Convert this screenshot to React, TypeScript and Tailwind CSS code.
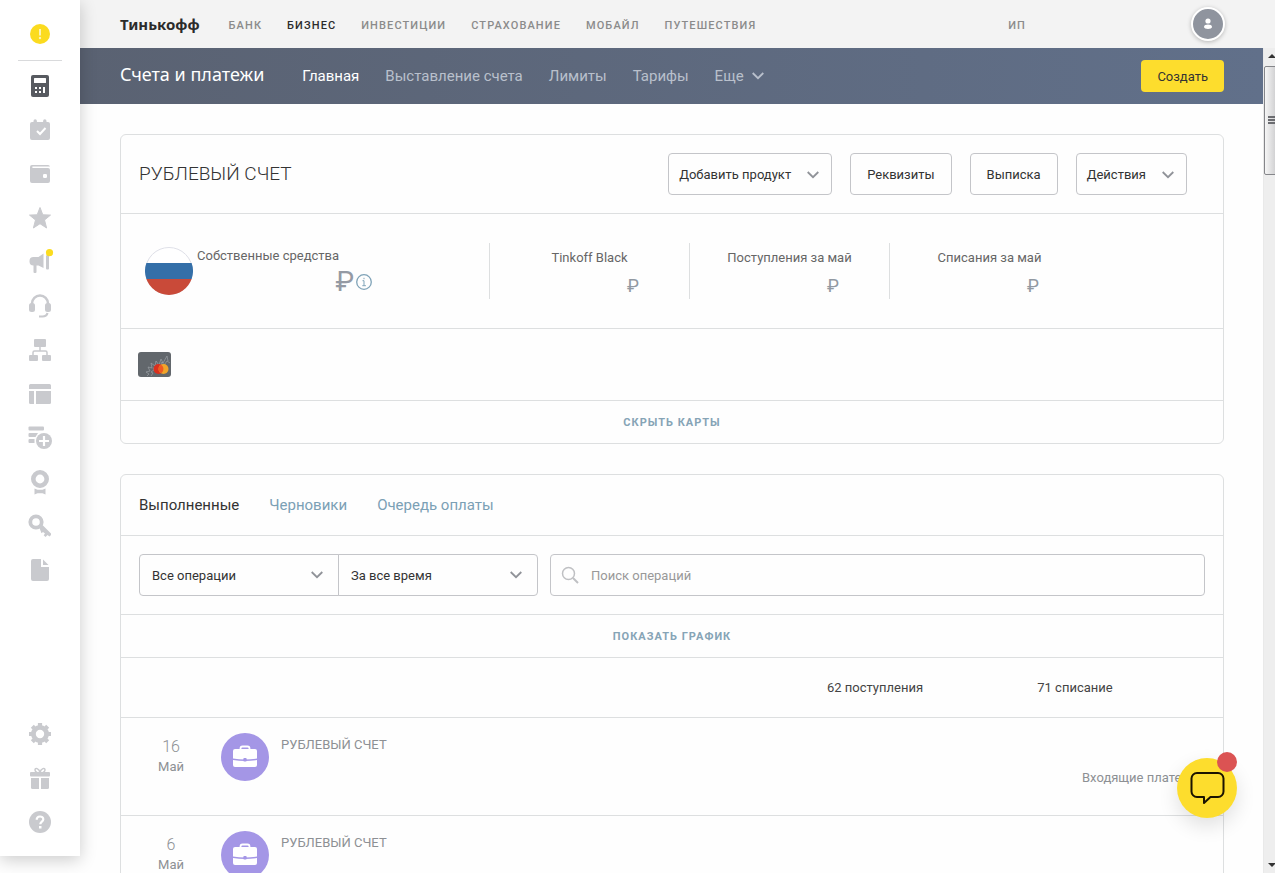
import React, { useState } from "react";
import classNames from "clsx";

type IconProps = { className?: string };

function ChevronIcon({ className }: IconProps) {
  return (
    <svg
      viewBox="0 0 12 8"
      className={classNames("w-3 h-2 flex-shrink-0", className)}
      fill="none"
      stroke="currentColor"
      strokeWidth="1.800"
      aria-hidden="true"
    >
      <path d="M0.7 1 L6 6.2 L11.3 1" />
    </svg>
  );
}

function CalculatorIcon() {
  return (
    <>
      <rect x="3" y="1" width="18" height="22" rx="2" />
      <g fill="#fff">
        <rect x="6" y="4" width="12" height="5" rx="0.5" />
        <rect x="7" y="13" width="2" height="2" />
        <rect x="11" y="13" width="2" height="2" />
        <rect x="7" y="17" width="2" height="2" />
        <rect x="11" y="17" width="2" height="2" />
        <rect x="15" y="13" width="2" height="6" />
      </g>
    </>
  );
}

function CalendarIcon() {
  return (
    <>
      <path d="M4 4h1.5V3a1.7 1.7 0 0 1 3.4 0v1h6.2V3a1.7 1.7 0 0 1 3.4 0v1H20a2 2 0 0 1 2 2v14a2 2 0 0 1-2 2H4a2 2 0 0 1-2-2V6a2 2 0 0 1 2-2z" />
      <path d="M9 13l3 3 5.5-6" fill="none" stroke="#fff" strokeWidth="2" />
    </>
  );
}

function WalletIcon() {
  return (
    <>
      <path d="M4 3h16a2 2 0 0 1 2 1.6H4.4V6H20a2 2 0 0 1 2 2v11a2 2 0 0 1-2 2H4a2 2 0 0 1-2-2V5a2 2 0 0 1 2-2z" />
      <rect x="15" y="12" width="4" height="4" rx="1.2" fill="#fff" />
    </>
  );
}

function StarIcon() {
  return (
    <path
      d="M12 1.500l2.800 7.300 7.700.300-6 4.900 2.100 8L12 17.700 5.400 22l2.100-8-6-4.900 7.700-.3z"
      stroke="currentColor"
      strokeLinejoin="round"
    />
  );
}

function MegaphoneIcon() {
  return (
    <>
      <path d="M15.500 3.500v14.500l-5-2.500H5.500A4 4 0 0 1 1.500 11.500v-.5a4 4 0 0 1 4-4h5z" />
      <rect x="5.500" y="14" width="3" height="9" rx="1" />
      <rect x="18" y="5" width="3" height="14.500" rx="1" />
      <circle cx="21.500" cy="2.700" r="3.600" fill="#fbdc1f" />
    </>
  );
}

function HeadsetIcon() {
  return (
    <>
      <path
        d="M4 13V9.500a8 8 0 0 1 16 0V13"
        fill="none"
        stroke="currentColor"
        strokeWidth="2.500"
      />
      <rect x="1" y="9" width="6" height="9" rx="2.500" />
      <rect x="17" y="9" width="6" height="9" rx="2.500" />
      <path
        d="M11 22.500h3.500q4 0 5-3.500"
        fill="none"
        stroke="currentColor"
        strokeWidth="2.200"
      />
    </>
  );
}

function StructureIcon() {
  return (
    <>
      <rect x="6" y="1" width="12" height="8" rx="1" />
      <rect x="1" y="17" width="9" height="6" rx="1" />
      <rect x="14" y="17" width="9" height="6" rx="1" />
      <path
        d="M12 9v4M5 17v-2.500a1.500 1.500 0 0 1 1.500-1.500h11a1.500 1.500 0 0 1 1.500 1.500V17"
        fill="none"
        stroke="currentColor"
        strokeWidth="1.500"
      />
    </>
  );
}

function LayoutIcon() {
  return (
    <>
      <path d="M2.500 2h19A1.500 1.500 0 0 1 23 3.500V7H1V3.500A1.500 1.500 0 0 1 2.500 2z" />
      <path d="M1 9h5v13H2.500A1.500 1.500 0 0 1 1 20.500z" />
      <path d="M8 9h15v11.500a1.500 1.500 0 0 1-1.500 1.500H8z" />
    </>
  );
}

function AddListIcon() {
  return (
    <>
      <rect x="0.500" y="0.500" width="15.500" height="4" rx="1" />
      <path d="M1.500 7H10l-2.500 4h-6a1 1 0 0 1-1-1V8a1 1 0 0 1 1-1z" />
      <path d="M1.500 13H6.500v4h-5a1 1 0 0 1-1-1v-2a1 1 0 0 1 1-1z" />
      <circle cx="16" cy="15" r="8" />
      <path d="M16 10v10M11 15h10" stroke="#fff" strokeWidth="2.200" />
    </>
  );
}

function AwardIcon() {
  return (
    <>
      <circle
        cx="12"
        cy="9"
        r="6.700"
        fill="none"
        stroke="currentColor"
        strokeWidth="4.600"
      />
      <path d="M6.500 18.500l3 1.200h5l3-1.200v6l-3-1.300h-5l-3 1.300z" />
    </>
  );
}

function KeyIcon() {
  return (
    <>
      <circle
        cx="8"
        cy="8"
        r="5.700"
        fill="none"
        stroke="currentColor"
        strokeWidth="3.800"
      />
      <path d="M11.500 14l3-3 8.500 8.500v1.500l-1.500 1.500-2-1.500-2 2-1.800-1.800 1.300-1.700-2-1.500-1.500 1.200z" />
    </>
  );
}

function FileIcon() {
  return (
    <>
      <path d="M5 1h8v8h8v12a2 2 0 0 1-2 2H5a2 2 0 0 1-2-2V3a2 2 0 0 1 2-2z" />
      <path d="M15 1.500L20.500 7H15z" />
    </>
  );
}

function GearIcon() {
  return (
    <>
      <circle
        cx="12"
        cy="12"
        r="6.600"
        fill="none"
        stroke="currentColor"
        strokeWidth="4.800"
      />
      <g stroke="currentColor" strokeWidth="4.200">
        <path d="M12 1v3M12 20v3M1 12h3M20 12h3" />
        <path d="M4.300 4.300l2 2M17.700 17.700l2 2M4.300 19.700l2-2M17.700 6.300l2-2" />
      </g>
    </>
  );
}

function GiftIcon() {
  return (
    <>
      <rect x="2" y="6" width="20" height="4.500" rx="1" />
      <path d="M3 12h8v11H4.500A1.500 1.500 0 0 1 3 21.500z" />
      <path d="M13 12h8v9.500a1.500 1.500 0 0 1-1.500 1.500H13z" />
      <path
        d="M12 6.500c-1-4.500-5-5-5-2.500 0 1.500 1 2 2 2.500M12 6.500c1-4.500 5-5 5-2.500 0 1.500-1 2-2 2.500"
        fill="none"
        stroke="currentColor"
        strokeWidth="1.500"
      />
    </>
  );
}

function HelpIcon() {
  return (
    <>
      <circle cx="12" cy="12" r="11" />
      <path
        d="M8.700 9.800c0-4.400 6.600-4.200 6.600-.5 0 2.400-3 2.400-3 5"
        fill="none"
        stroke="#fff"
        strokeWidth="2.200"
      />
      <rect x="11" y="16" width="2.500" height="2.500" fill="#fff" />
    </>
  );
}

const MAIN_ITEMS = [
  { label: "Счета", icon: CalculatorIcon },
  { label: "Календарь", icon: CalendarIcon },
  { label: "Кошелек", icon: WalletIcon },
  { label: "Избранное", icon: StarIcon },
  { label: "Продвижение", icon: MegaphoneIcon },
  { label: "Поддержка", icon: HeadsetIcon },
  { label: "Структура", icon: StructureIcon },
  { label: "Сайты", icon: LayoutIcon },
  { label: "Заявки", icon: AddListIcon },
  { label: "Награды", icon: AwardIcon },
  { label: "Доступ", icon: KeyIcon },
  { label: "Документы", icon: FileIcon },
];

const BOTTOM_ITEMS = [
  { label: "Настройки", icon: GearIcon },
  { label: "Подарки", icon: GiftIcon },
  { label: "Помощь", icon: HelpIcon },
];

type SidebarItemProps = {
  label: string;
  icon: () => React.ReactElement;
  active?: boolean;
};
function SidebarItem({ label, icon: Icon, active }: SidebarItemProps) {
  return (
    <a
      href="#"
      aria-label={label}
      className={classNames(
        "flex items-center justify-center w-full h-11",
        active ? "text-[#575a60]" : "text-[#c9cace]"
      )}
    >
      <svg
        viewBox="0 0 24 24"
        className="w-6 h-6 overflow-visible"
        fill="currentColor"
        aria-hidden="true"
      >
        <Icon />
      </svg>
    </a>
  );
}

function Sidebar() {
  return (
    <aside className="relative z-10 flex-shrink-0 flex flex-col items-center w-20 mb-[17px] pt-6 pb-3 bg-white shadow-[0_4px_16px_rgba(0,0,0,0.2)]">
      <svg viewBox="0 0 20 20" className="flex-shrink-0 w-5 h-5" aria-hidden="true">
        <circle cx="10" cy="10" r="10" fill="#fbdb1f" />
        <path d="M10 5v6.500" stroke="#fdf3b5" strokeWidth="2" />
        <circle cx="10" cy="14" r="1.200" fill="#fdf3b5" />
      </svg>
      <hr className="w-11 mt-4 mb-[3px] border-[#d9dadc]" />
      <nav className="w-full">
        {MAIN_ITEMS.map((item, i) => (
          <SidebarItem key={item.label} {...item} active={i === 0} />
        ))}
      </nav>
      <nav className="w-full mt-auto">
        {BOTTOM_ITEMS.map((item) => (
          <SidebarItem key={item.label} {...item} />
        ))}
      </nav>
    </aside>
  );
}

const SITES = [
  "БАНК",
  "БИЗНЕС",
  "ИНВЕСТИЦИИ",
  "СТРАХОВАНИЕ",
  "МОБАЙЛ",
  "ПУТЕШЕСТВИЯ",
];

function TopBar() {
  return (
    <header className="flex-shrink-0 flex items-center h-12 pl-10 pr-[50px] bg-[#f3f3f3] text-[11px] font-medium tracking-widest text-[#8b8b8b]">
      <a
        href="#"
        className="mr-[29px] font-['Noto_Sans',sans-serif] text-[15px] font-bold tracking-normal text-[#2b2b2b]"
      >
        Тинькофф
      </a>
      <nav className="flex gap-[25px] pt-1">
        {SITES.map((site) => (
          <a
            key={site}
            href="#"
            className={classNames(site === "БИЗНЕС" && "text-[#2b2b2b]")}
          >
            {site}
          </a>
        ))}
      </nav>
      <span className="ml-auto mr-[165px] pt-1">ИП</span>
      <button
        aria-label="Профиль"
        className="w-[34px] h-[34px] rounded-full border-2 border-white bg-[#8f949e] shadow-[0_1px_4px_rgba(0,0,0,0.25)]"
      >
        <svg viewBox="0 0 30 30" fill="#fff" aria-hidden="true">
          <circle cx="15" cy="12" r="2.600" />
          <path d="M11 18c0-3.200 8-3.200 8 0 0 2.600-8 2.600-8 0z" />
        </svg>
      </button>
    </header>
  );
}

const SECTIONS = ["Главная", "Выставление счета", "Лимиты", "Тарифы"];

function SectionBar() {
  return (
    <div className="flex items-center h-14 pl-10 pr-[39px] bg-linear-to-r from-[#5a6272] to-[#61708a] text-[15px] text-[#b9c0cc]">
      <h1 className="mr-[38px] pb-1 font-['Noto_Sans',sans-serif] text-lg text-white">
        Счета и платежи
      </h1>
      <nav className="flex items-center gap-[26px]">
        {SECTIONS.map((section, i) => (
          <a
            key={section}
            href="#"
            className={classNames(i === 0 && "text-white")}
          >
            {section}
          </a>
        ))}
        <button className="flex items-center gap-2">
          Еще
          <ChevronIcon />
        </button>
      </nav>
      <button className="ml-auto h-8 px-4 pt-px rounded bg-[#fddd2d] text-[13px] text-[#333]">
        Создать
      </button>
    </div>
  );
}

type ActionButtonProps = { label: string; withMenu?: boolean };
function ActionButton({ label, withMenu }: ActionButtonProps) {
  return (
    <button
      className={classNames(
        "flex items-center h-[42px] pt-px rounded border border-[#c4c5c9] text-[13px] text-[#333]",
        withMenu ? "gap-4 pl-[10px] pr-3" : "px-4"
      )}
    >
      {label}
      {withMenu && <ChevronIcon className="text-[#909399]" />}
    </button>
  );
}

function AccountStat({ label }: { label: string }) {
  return (
    <div className="w-[200px] h-14 pt-[5px] border-l border-[#dddfe0] text-center text-[13px] leading-5 text-[#666]">
      {label}
      <div className="mt-1 pr-[50px] text-right text-lg leading-7 text-[#9299a2]">
        ₽
      </div>
    </div>
  );
}

function AccountCard() {
  return (
    <section className="border border-[#dddfe0] rounded-md">
      <div className="flex items-center justify-between h-[79px] pl-[18px] pr-9 border-b border-[#dddfe0]">
        <h2 className="text-[19px] font-light text-[#333]">РУБЛЕВЫЙ СЧЕТ</h2>
        <div className="flex gap-[18px]">
          <ActionButton label="Добавить продукт" withMenu />
          <ActionButton label="Реквизиты" />
          <ActionButton label="Выписка" />
          <ActionButton label="Действия" withMenu />
        </div>
      </div>
      <div className="flex items-center h-[115px] border-b border-[#dddfe0]">
        <div className="flex items-center w-[368px] pl-6 gap-1">
          <svg viewBox="0 0 48 48" className="w-12 h-12" aria-hidden="true">
            <circle cx="24" cy="24" r="23.500" fill="#fff" stroke="#dfe0e8" />
            <path d="M1.400 16H46.600A24 24 0 0 1 46.600 32H1.400A24 24 0 0 1 1.400 16z" fill="#346fa8" />
            <path d="M1.400 32H46.600A24 24 0 0 1 1.400 32z" fill="#c94a39" />
          </svg>
          <div className="w-[175px] pt-px text-[13px] leading-5 text-[#666]">
            Собственные средства
            <div className="flex items-center justify-end gap-[2px] text-[28px] leading-8 text-[#949aa4]">
              ₽
              <svg
                viewBox="0 0 16 16"
                className="w-4 h-4"
                fill="none"
                stroke="#7fa3b8"
                aria-hidden="true"
              >
                <circle cx="8" cy="8" r="7.300" strokeWidth="1.300" />
                <path d="M6.500 6.700H8V11.500M6.300 11.700h3.600M8 3.800v1.400" />
              </svg>
            </div>
          </div>
        </div>
        <AccountStat label="Tinkoff Black" />
        <AccountStat label="Поступления за май" />
        <AccountStat label="Списания за май" />
      </div>
      <div className="flex items-center h-[72px] px-[17px] border-b border-[#dddfe0]">
        <svg viewBox="0 0 33 25" className="w-[33px] h-[25px]" aria-hidden="true">
          <rect width="33" height="25" rx="3" fill="#62676c" />
          <path
            d="M9 24l2-2-3-2 4-1-2-4 4 1-1-5 4 3 1-5 3 4 2-6 2 4 4-7 1 5M13 24l2-3-2-1 3-2-1-2 4 0 0-4 3 2 2-4 2 3 3-4 3 2"
            fill="none"
            stroke="#a3a8ad"
            strokeWidth="0.600"
          />
          <circle cx="20.500" cy="17" r="5" fill="#d9301e" />
          <circle cx="25.500" cy="17" r="5" fill="#f0a52a" />
          <path d="M23 12.700a5 5 0 0 1 0 8.600 5 5 0 0 1 0-8.600z" fill="#ee5a22" />
        </svg>
      </div>
      <button className="block w-full h-[42px] pt-[2px] text-[11px] font-bold tracking-[1px] text-[#86a4b6]">
        СКРЫТЬ КАРТЫ
      </button>
    </section>
  );
}

type FilterSelectProps = {
  label: string;
  options: string[];
  className?: string;
};
function FilterSelect({ label, options, className }: FilterSelectProps) {
  return (
    <label
      className={classNames(
        "grid items-center w-[200px] h-[42px] border border-[#c4c5c9]",
        className
      )}
    >
      <select
        aria-label={label}
        className="col-start-1 row-start-1 w-full h-full px-3 pt-px appearance-none bg-transparent text-[13px] text-[#333] outline-none"
      >
        {options.map((option) => (
          <option key={option}>{option}</option>
        ))}
      </select>
      <ChevronIcon className="col-start-1 row-start-1 justify-self-end mr-[15px] pointer-events-none text-[#909399]" />
    </label>
  );
}

type Operation = { day: number; month: string; account: string; kind?: string };

const OPERATIONS: Operation[] = [
  { day: 16, month: "Май", account: "РУБЛЕВЫЙ СЧЕТ", kind: "Входящие платежи" },
  { day: 6, month: "Май", account: "РУБЛЕВЫЙ СЧЕТ" },
];

function OperationRow({ operation }: { operation: Operation }) {
  return (
    <li className="flex items-start h-[98px] px-[18px] pt-[15px] border-t border-[#dddfe0] text-[13px] leading-5 text-[#8d9094]">
      <div className="w-16 pt-1 text-center">
        <div className="text-base leading-5 font-light">{operation.day}</div>
        {operation.month}
      </div>
      <svg viewBox="0 0 48 48" className="w-12 h-12 ml-[18px] mr-3" aria-hidden="true">
        <circle cx="24" cy="24" r="24" fill="#a496e6" />
        <path
          d="M19.500 16.500v-1a2 2 0 0 1 2-2h5a2 2 0 0 1 2 2v1"
          fill="none"
          stroke="#fff"
          strokeWidth="1.800"
        />
        <path d="M14 16h20a2 2 0 0 1 2 2v7.500q-12 1.800-24 0V18a2 2 0 0 1 2-2z" fill="#fff" />
        <path d="M12 27q12 1.800 24 0v5a2 2 0 0 1-2 2H14a2 2 0 0 1-2-2z" fill="#fff" />
        <rect x="22.300" y="25" width="3.400" height="3.600" rx="1" fill="#a496e6" />
      </svg>
      <span className="pt-[2px]">{operation.account}</span>
      {operation.kind && (
        <span className="w-[123px] ml-auto mt-[35px] whitespace-nowrap">
          {operation.kind}
        </span>
      )}
    </li>
  );
}

const TABS = ["Выполненные", "Черновики", "Очередь оплаты"];

function OperationsCard() {
  const [activeTab, setActiveTab] = useState(TABS[0]);

  return (
    <section className="border border-[#dddfe0] rounded-md">
      <div className="flex items-center gap-[30px] h-[61px] px-[18px] border-b border-[#dddfe0] text-[15px]">
        {TABS.map((tab) => (
          <button
            key={tab}
            onClick={() => setActiveTab(tab)}
            className={tab === activeTab ? "text-[#333]" : "text-[#7ba0b5]"}
          >
            {tab}
          </button>
        ))}
      </div>
      <div className="flex items-center h-[79px] px-[18px] border-b border-[#dddfe0]">
        <FilterSelect
          label="Тип операций"
          options={["Все операции", "Поступления", "Списания"]}
          className="rounded-l"
        />
        <FilterSelect
          label="Период"
          options={["За все время", "За месяц", "За неделю"]}
          className="-ml-px rounded-r"
        />
        <label className="flex-1 flex items-center gap-3 h-[42px] ml-3 px-[10px] rounded border border-[#c4c5c9]">
          <svg
            viewBox="0 0 18 18"
            className="w-[18px] h-[18px] flex-shrink-0 text-[#bfc0c3]"
            fill="none"
            stroke="currentColor"
            strokeWidth="1.500"
            aria-hidden="true"
          >
            <circle cx="7.500" cy="7.500" r="6" />
            <path d="M12 12l5 5" strokeWidth="2" />
          </svg>
          <input
            type="text"
            aria-label="Поиск операций"
            placeholder="Поиск операций"
            className="flex-1 h-full text-[13px] outline-none placeholder:text-[#999]"
          />
        </label>
      </div>
      <button className="block w-full h-[42px] pt-[2px] text-[11px] font-bold tracking-[1px] text-[#86a4b6]">
        ПОКАЗАТЬ ГРАФИК
      </button>
      <div className="flex justify-end h-[60px] pr-12 border-t border-[#dddfe0] text-[13px] leading-[60px] text-center text-[#444]">
        <span className="w-[200px]">62 поступления</span>
        <span className="w-[200px]">71 списание</span>
      </div>
      <ul>
        {OPERATIONS.map((operation) => (
          <OperationRow key={operation.day} operation={operation} />
        ))}
      </ul>
    </section>
  );
}

function Scrollbar() {
  return (
    <div
      className="flex-shrink-0 flex flex-col w-3 overflow-hidden border-l border-[#e9e9e9] bg-[#eee]"
      aria-hidden="true"
    >
      <div className="w-4 h-[18px] pl-1 pt-[6px]">
        <svg viewBox="0 0 8 4" className="block w-2 h-1">
          <path d="M0 4L4 0l4 4z" fill="#333" />
        </svg>
      </div>
      <div className="flex flex-col items-center justify-center gap-px w-4 h-[109px] pb-[2px] rounded-xs border border-[#85868a] bg-linear-to-r from-[#f6f6f6] to-[#c4c4c6]">
        <div className="w-2 h-[2px] bg-[#6b6c70]" />
        <div className="w-2 h-[2px] bg-[#6b6c70]" />
        <div className="w-2 h-[2px] bg-[#6b6c70]" />
      </div>
      <div className="w-4 mt-auto pl-1 pb-[6px]">
        <svg viewBox="0 0 8 4" className="block w-2 h-1">
          <path d="M0 0h8L4 4z" fill="#333" />
        </svg>
      </div>
    </div>
  );
}

function ChatButton() {
  return (
    <button
      aria-label="Чат с поддержкой"
      className="fixed z-20 right-[38px] bottom-[55px] w-[60px] h-[60px] rounded-full bg-[#fddd2d] shadow-[0_8px_20px_rgba(0,0,0,0.12)]"
    >
      <svg
        viewBox="0 0 60 60"
        fill="none"
        stroke="#1a1300"
        strokeWidth="2"
        aria-hidden="true"
      >
        <path
          d="M20 15h21a5.500 5.500 0 0 1 5.500 5.500v13a5.500 5.500 0 0 1-5.500 5.500h-7.500L27 45v-6h-7a5.500 5.500 0 0 1-5.500-5.500v-13A5.500 5.500 0 0 1 20 15z"
          strokeLinejoin="round"
        />
      </svg>
      <span className="absolute right-0 -top-[6px] w-5 h-5 rounded-full bg-[#db5353]" />
    </button>
  );
}

export default function App() {
  return (
    <div className="flex h-screen overflow-hidden bg-[#fefefe] font-[Roboto,sans-serif]">
      <Sidebar />
      <div className="flex-1 flex flex-col min-w-0">
        <TopBar />
        <div className="flex-1 flex min-h-0">
          <div className="flex-1 min-w-0 overflow-hidden">
            <SectionBar />
            <main className="flex flex-col gap-[30px] pl-10 pr-[39px] pt-[30px]">
              <AccountCard />
              <OperationsCard />
            </main>
          </div>
          <Scrollbar />
        </div>
      </div>
      <ChatButton />
    </div>
  );
}
